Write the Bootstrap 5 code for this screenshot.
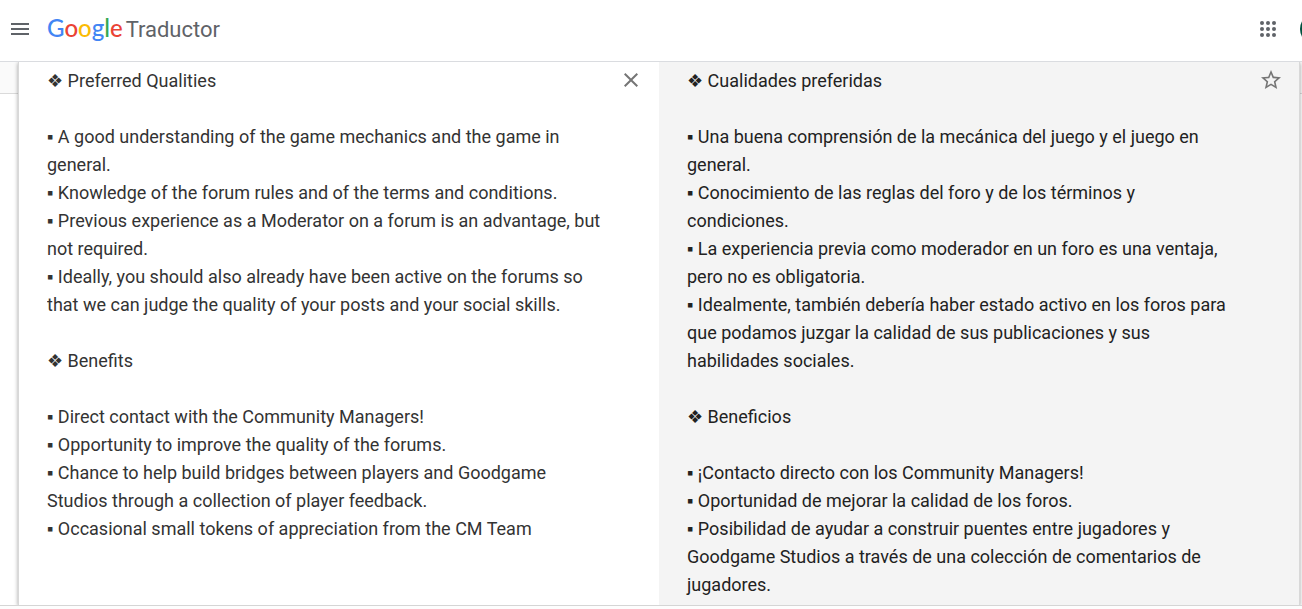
<!DOCTYPE html>
<html lang="es">
<head>
<meta charset="utf-8">
<meta name="viewport" content="width=device-width, initial-scale=1">
<title>Google Traductor</title>
<link href="https://cdn.jsdelivr.net/npm/bootstrap@5.3.0/dist/css/bootstrap.min.css" rel="stylesheet">
<style>
  body { background: #fdfdfd; font-family: Roboto, "Liberation Sans", "DejaVu Sans", sans-serif; }
  .top-bar { height: 62px; padding: 0 0 3px 8px; border-bottom: 1px solid #dadce0; background: #fff; }
  .icon-btn { border: 0; padding: 0; background: none; color: #5f6368; width: 24px; height: 24px; line-height: 0; flex: none; }
  .brand { margin-left: 15px; color: #5f6368; text-decoration: none; line-height: 28px; }
  .brand-name { font: 500 24px/28px Lato, sans-serif; }
  .brand-product { font: 400 22px/28px Roboto, sans-serif; margin-left: 3px; }
  .g-blue { color: #4285f4; } .g-red { color: #ea4335; } .g-yellow { color: #fbbc05; } .g-green { color: #34a853; }
  .avatar { width: 32px; height: 32px; margin: 0 -30px 0 20px; background: #00513f; color: #fff; border: 0; padding: 0; flex: none; }
  .translator { border-bottom: 1px solid #d5d5d5; background: #fff; }
  .gutter { width: 18px; flex: none; }
  .gutter-end { width: 2px; }
  .gutter::before { content: ""; display: block; height: 32px; background: #fafafa; border-bottom: 1px solid #dadada; }
  .panes { box-shadow: 0 1px 4px rgba(0,0,0,.37); background: #fff; z-index: 1; border-left: 1px solid #d8d8d8; border-right: 1px solid #d8d8d8; min-width: 0; }
  .pane { flex: 1 1 0; min-width: 0; padding: 5px 16px 6px 28px; }
  .pane-target { background: #f4f4f4; }
  .passage { font-size: 18px; line-height: 28px; color: #333; white-space: pre-wrap; min-width: 0; }
  textarea.passage { border: 0; padding: 0; resize: none; outline: 0; background: none; overflow: hidden; }
  .pane-target .passage { color: #222; padding-right: 16px; }
  .pane .icon-btn { color: #757575; margin: 1px 0 0 16px; }
</style>
</head>
<body>
<header class="top-bar d-flex align-items-center overflow-hidden">
  <button class="icon-btn" type="button" aria-label="Menú principal">
    <svg width="24" height="24" viewBox="0 0 24 24" fill="currentColor"><path d="M3 18h18v-2H3v2zm0-5h18v-2H3v2zm0-7v2h18V6H3z"/></svg>
  </button>
  <a class="brand d-flex align-items-baseline" href="#"><span class="brand-name"><span class="g-blue">G</span><span class="g-red">o</span><span class="g-yellow">o</span><span class="g-blue">g</span><span class="g-green">l</span><span class="g-red">e</span></span><span class="brand-product">Traductor</span></a>
  <button class="icon-btn ms-auto" type="button" aria-label="Aplicaciones de Google">
    <svg width="24" height="24" viewBox="0 0 24 24" fill="currentColor"><circle cx="6" cy="6" r="2"/><circle cx="12" cy="6" r="2"/><circle cx="18" cy="6" r="2"/><circle cx="6" cy="12" r="2"/><circle cx="12" cy="12" r="2"/><circle cx="18" cy="12" r="2"/><circle cx="6" cy="18" r="2"/><circle cx="12" cy="18" r="2"/><circle cx="18" cy="18" r="2"/></svg>
  </button>
  <button class="avatar rounded-circle" type="button" aria-label="Cuenta de Google"></button>
</header>
<main class="translator d-flex overflow-hidden">
  <div class="gutter"></div>
  <div class="panes d-flex flex-grow-1 position-relative">
    <section class="pane d-flex align-items-start">
      <textarea class="passage flex-grow-1 align-self-stretch" aria-label="Texto de origen" spellcheck="false">❖ Preferred Qualities

▪ A good understanding of the game mechanics and the game in general.
▪ Knowledge of the forum rules and of the terms and conditions.
▪ Previous experience as a Moderator on a forum is an advantage, but not required.
▪ Ideally, you should also already have been active on the forums so that we can judge the quality of your posts and your social skills.

❖ Benefits

▪ Direct contact with the Community Managers!
▪ Opportunity to improve the quality of the forums.
▪ Chance to help build bridges between players and Goodgame Studios through a collection of player feedback.
▪ Occasional small tokens of appreciation from the CM Team</textarea>
      <button class="icon-btn" type="button" aria-label="Borrar texto">
        <svg width="24" height="24" viewBox="0 0 24 24" fill="currentColor"><path d="M19 6.41L17.59 5 12 10.59 6.41 5 5 6.41 10.59 12 5 17.59 6.41 19 12 13.41 17.59 19 19 17.59 13.41 12z"/></svg>
      </button>
    </section>
    <section class="pane pane-target d-flex align-items-start">
      <div class="passage flex-grow-1">❖ Cualidades preferidas

▪ Una buena comprensión de la mecánica del juego y el juego en general.
▪ Conocimiento de las reglas del foro y de los términos y condiciones.
▪ La experiencia previa como moderador en un foro es una ventaja, pero no es obligatoria.
▪ Idealmente, también debería haber estado activo en los foros para que podamos juzgar la calidad de sus publicaciones y sus habilidades sociales.

❖ Beneficios

▪ ¡Contacto directo con los Community Managers!
▪ Oportunidad de mejorar la calidad de los foros.
▪ Posibilidad de ayudar a construir puentes entre jugadores y Goodgame Studios a través de una colección de comentarios de jugadores.</div>
      <button class="icon-btn" type="button" aria-label="Guardar traducción">
        <svg width="24" height="24" viewBox="0 0 24 24" fill="currentColor"><path d="M22 9.24l-7.19-.62L12 2 9.19 8.63 2 9.24l5.46 4.73L5.82 21 12 17.27 18.18 21l-1.63-7.03L22 9.24zM12 15.4l-3.76 2.27 1-4.28-3.32-2.88 4.38-.38L12 6.1l1.71 4.04 4.38.38-3.32 2.88 1 4.28L12 15.4z"/></svg>
      </button>
    </section>
  </div>
  <div class="gutter gutter-end"></div>
</main>
<script src="https://cdn.jsdelivr.net/npm/bootstrap@5.3.0/dist/js/bootstrap.bundle.min.js"></script>
</body>
</html>
